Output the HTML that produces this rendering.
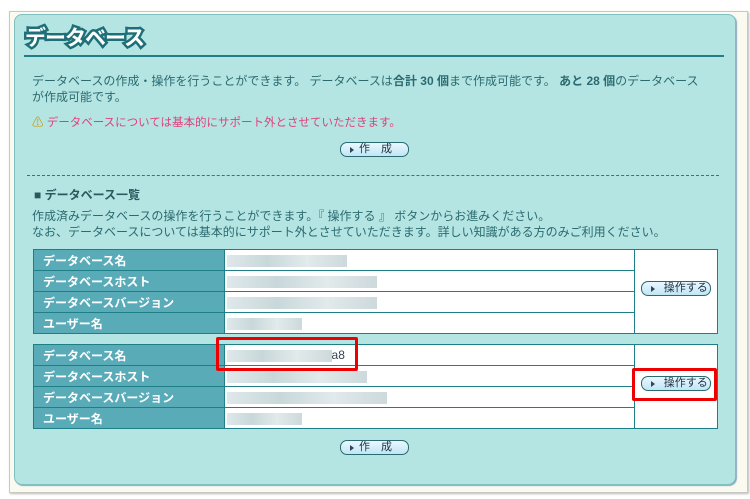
<!DOCTYPE html>
<html><head><meta charset="utf-8"><style>
body{margin:0;width:750px;height:499px;background:#fff;font-family:"Liberation Sans","Noto Sans CJK JP",sans-serif;position:relative;overflow:hidden}
.outer{position:absolute;left:9px;top:11px;width:737px;height:480px;background:#fbfaf0;border:1px solid #c8c8c0;box-shadow:1px 1px 2px #bbb}
.panel{position:absolute;left:14px;top:14px;width:720px;height:469px;background:#b5e5e3;border:1px solid #7fbfbf;border-radius:8px;box-shadow:1px 1px 1px #8ab}
.title{position:absolute;left:25px;top:22px;font-size:21px;font-weight:bold;color:#fff;-webkit-text-stroke:5px #1e6f78;paint-order:stroke fill;letter-spacing:-1px}
.hl{position:absolute;left:24px;top:55px;width:700px;height:2px;background:#1f7f86}
.t{position:absolute;font-size:12px;color:#2a6a70;white-space:nowrap}
.btn{position:absolute;height:13px;border:1px solid #2a6a70;border-radius:7px;background:linear-gradient(#eaf8ff,#bfe6f5);font-size:11px;color:#234;line-height:13px;box-sizing:content-box}
.btn:before{content:"";position:absolute;left:9px;top:4px;border-left:4px solid #345;border-top:3px solid transparent;border-bottom:3px solid transparent}
.dash{position:absolute;left:27px;top:175px;width:692px;border-top:1px dashed #2a7a80}
table{position:absolute;left:33px;width:685px;border-collapse:collapse;background:#fff}
td{border:1px solid #1f7f86;height:20px;padding:0;font-size:12px}
td.l{width:190px;background:#5aabb8;color:#fff;font-weight:bold;padding-left:9px;box-sizing:border-box}
td.v{width:408px}
td.b{width:82px;position:relative}
.blur{display:inline-block;height:12px;background:linear-gradient(90deg,#dfe8ea,#c8d8da,#e2eaeb,#cdd9db);vertical-align:middle;margin-left:2px}
.red{position:absolute;border:3px solid #e00;border-radius:2px}
</style></head><body>
<div class="outer"></div>
<div class="panel"></div>
<div class="title">データベース</div>
<div class="hl"></div>
<div class="t" style="left:32px;top:72px">データベースの作成・操作を行うことができます。 データベースは<b>合計 30 個</b>まで作成可能です。 <b>あと 28 個</b>のデータベース</div>
<div class="t" style="left:32px;top:88px">が作成可能です。</div>
<div class="t" style="left:32px;top:114px;color:#e0407a;font-size:11.5px"><span style="color:#c90">⚠</span> データベースについては基本的にサポート外とさせていただきます。</div>
<div class="btn" style="left:340px;top:142px;width:67px"><span style="margin-left:18px">作　成</span></div>
<div class="dash"></div>
<div class="t" style="left:34px;top:186px;font-weight:bold;color:#2a5a60">■ データベース一覧</div>
<div class="t" style="left:32px;top:207px">作成済みデータベースの操作を行うことができます。『 操作する 』 ボタンからお進みください。</div>
<div class="t" style="left:32px;top:223px">なお、データベースについては基本的にサポート外とさせていただきます。詳しい知識がある方のみご利用ください。</div>
<table style="top:249px">
<tr><td class="l">データベース名</td><td class="v"><span class="blur" style="width:120px"></span></td><td class="b" rowspan="4"><div class="btn" style="left:6px;top:31px;width:68px"><span style="margin-left:22px">操作する</span></div></td></tr>
<tr><td class="l">データベースホスト</td><td class="v"><span class="blur" style="width:150px"></span></td></tr>
<tr><td class="l">データベースバージョン</td><td class="v"><span class="blur" style="width:150px"></span></td></tr>
<tr><td class="l">ユーザー名</td><td class="v"><span class="blur" style="width:75px"></span></td></tr>
</table>
<table style="top:344px">
<tr><td class="l">データベース名</td><td class="v"><span class="blur" style="width:105px"></span><span style="color:#345">a8</span></td><td class="b" rowspan="4"><div class="btn" style="left:6px;top:31px;width:68px"><span style="margin-left:22px">操作する</span></div></td></tr>
<tr><td class="l">データベースホスト</td><td class="v"><span class="blur" style="width:140px"></span></td></tr>
<tr><td class="l">データベースバージョン</td><td class="v"><span class="blur" style="width:160px"></span></td></tr>
<tr><td class="l">ユーザー名</td><td class="v"><span class="blur" style="width:75px"></span></td></tr>
</table>
<div class="red" style="left:216px;top:337px;width:136px;height:28px"></div>
<div class="red" style="left:632px;top:368px;width:79px;height:27px"></div>
<div class="btn" style="left:340px;top:440px;width:67px"><span style="margin-left:18px">作　成</span></div>
</body></html>
